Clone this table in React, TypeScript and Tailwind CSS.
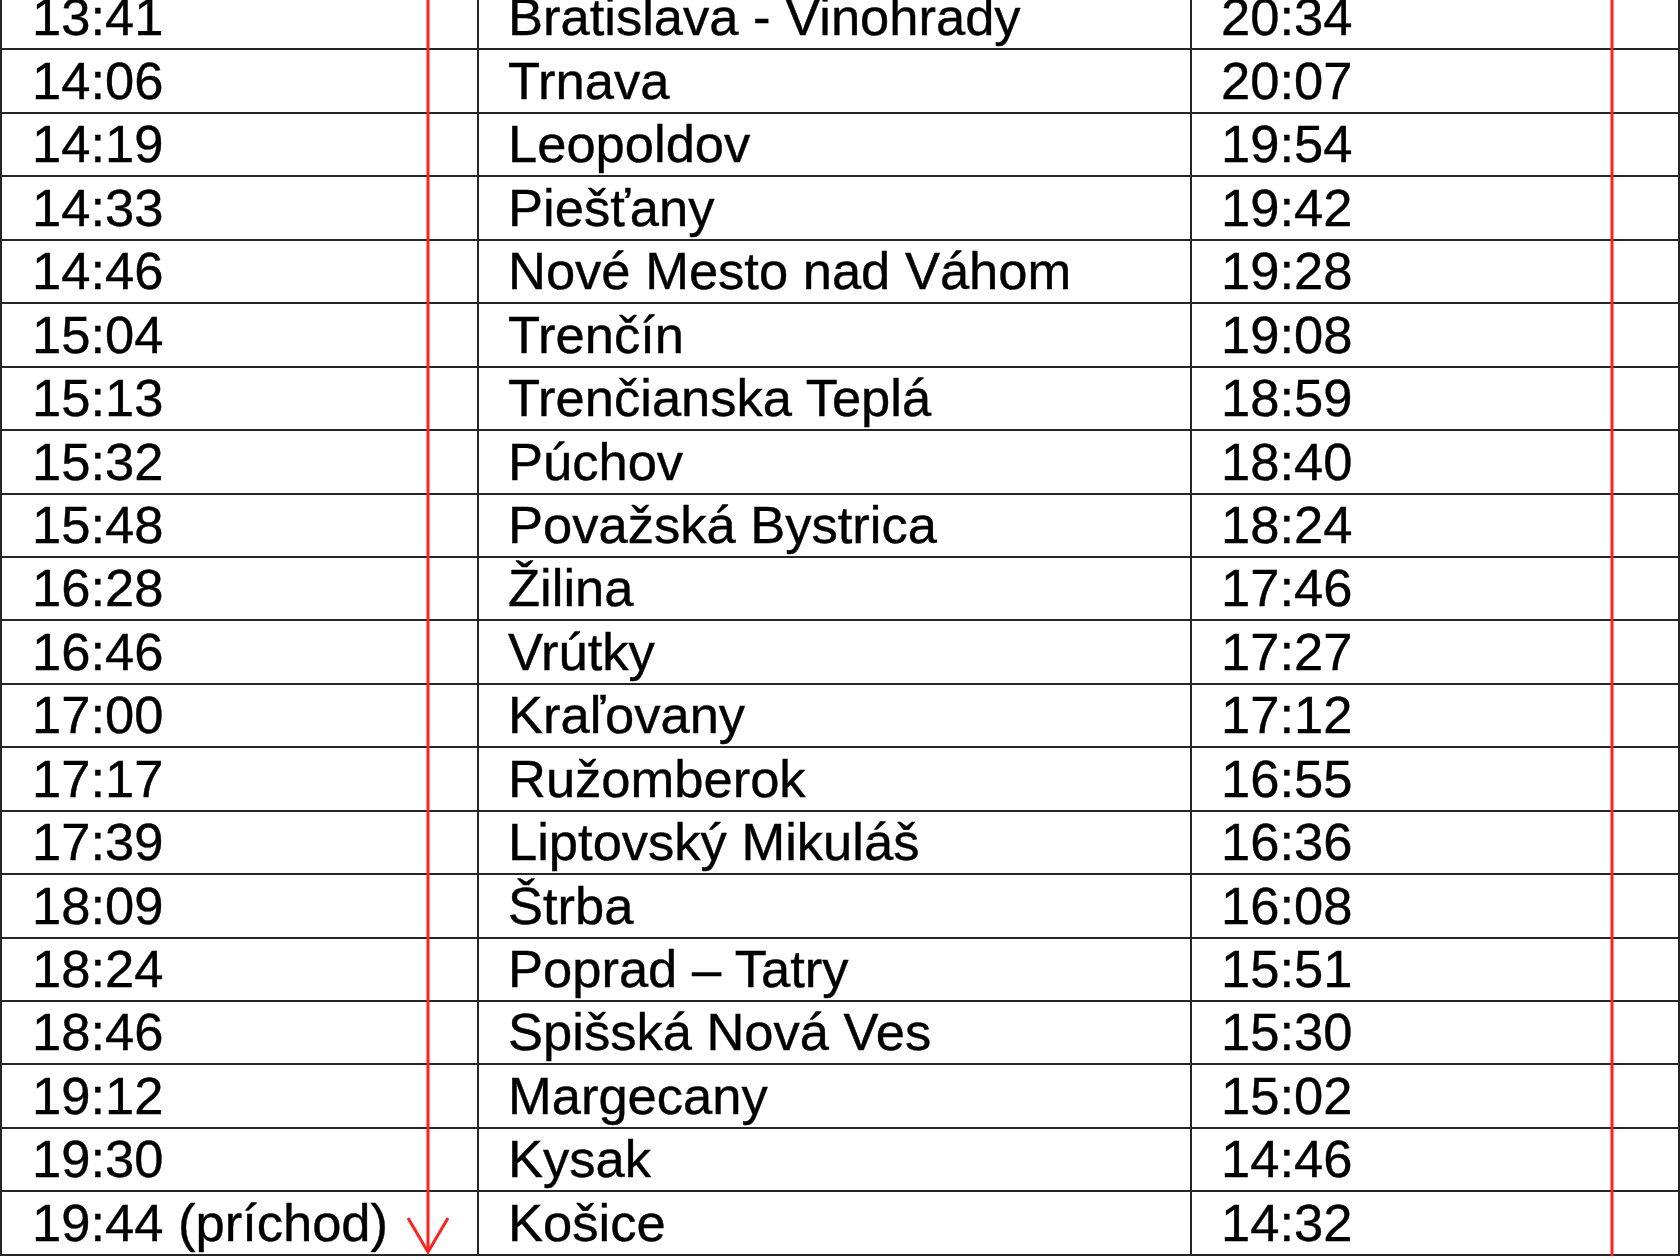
/**
 * Cestovný poriadok Bratislava – Košice (výrez).
 * Tri stĺpce: odchod tam, stanica, príchod späť.
 * Červené šípky naznačujú smer cesty.
 */

type Stop = {
	there: string;
	station: string;
	back: string;
};

const STOPS: Stop[] = [
	{ there: "13:41", station: "Bratislava - Vinohrady", back: "20:34" },
	{ there: "14:06", station: "Trnava", back: "20:07" },
	{ there: "14:19", station: "Leopoldov", back: "19:54" },
	{ there: "14:33", station: "Piešťany", back: "19:42" },
	{ there: "14:46", station: "Nové Mesto nad Váhom", back: "19:28" },
	{ there: "15:04", station: "Trenčín", back: "19:08" },
	{ there: "15:13", station: "Trenčianska Teplá", back: "18:59" },
	{ there: "15:32", station: "Púchov", back: "18:40" },
	{ there: "15:48", station: "Považská Bystrica", back: "18:24" },
	{ there: "16:28", station: "Žilina", back: "17:46" },
	{ there: "16:46", station: "Vrútky", back: "17:27" },
	{ there: "17:00", station: "Kraľovany", back: "17:12" },
	{ there: "17:17", station: "Ružomberok", back: "16:55" },
	{ there: "17:39", station: "Liptovský Mikuláš", back: "16:36" },
	{ there: "18:09", station: "Štrba", back: "16:08" },
	{ there: "18:24", station: "Poprad – Tatry", back: "15:51" },
	{ there: "18:46", station: "Spišská Nová Ves", back: "15:30" },
	{ there: "19:12", station: "Margecany", back: "15:02" },
	{ there: "19:30", station: "Kysak", back: "14:46" },
	{ there: "19:44 (príchod)", station: "Košice", back: "14:32" },
];

export default function App() {
	return (
		<div className="relative h-[1260px] w-[1680px] overflow-hidden bg-white font-['Liberation_Sans',Arial,sans-serif] text-[52.5px] leading-none text-black [-webkit-text-stroke:0.4px_black]">
			{/* Tabuľka — prvý riadok je hore odrezaný */}
			<div className="mt-[-15px] border-x-2 border-b-2 border-[#262626]">
				{STOPS.map((stop) => (
					<div
						key={stop.station}
						className="grid h-[63.45px] grid-cols-[477px_713px_1fr] border-t-2 border-[#262626]"
					>
						<div className="flex items-center whitespace-nowrap border-r-2 border-[#262626] pl-[30px]">
							{stop.there}
						</div>
						<div className="flex items-center whitespace-nowrap border-r-2 border-[#262626] pl-[29px]">
							{stop.station}
						</div>
						<div className="flex items-center whitespace-nowrap pl-[29px]">
							{stop.back}
						</div>
					</div>
				))}
			</div>

			{/* Červené šípky smeru jazdy */}
			<svg
				aria-hidden="true"
				className="pointer-events-none absolute inset-0"
				width="1680"
				height="1260"
				viewBox="0 0 1680 1260"
			>
				<g stroke="#ff1f1f" strokeWidth="3" fill="none">
					<line x1="428" y1="0" x2="428" y2="1252" />
					<polyline points="408,1218 428,1252 448,1218" />
					<line x1="1612" y1="0" x2="1612" y2="1256" />
				</g>
			</svg>
		</div>
	);
}
